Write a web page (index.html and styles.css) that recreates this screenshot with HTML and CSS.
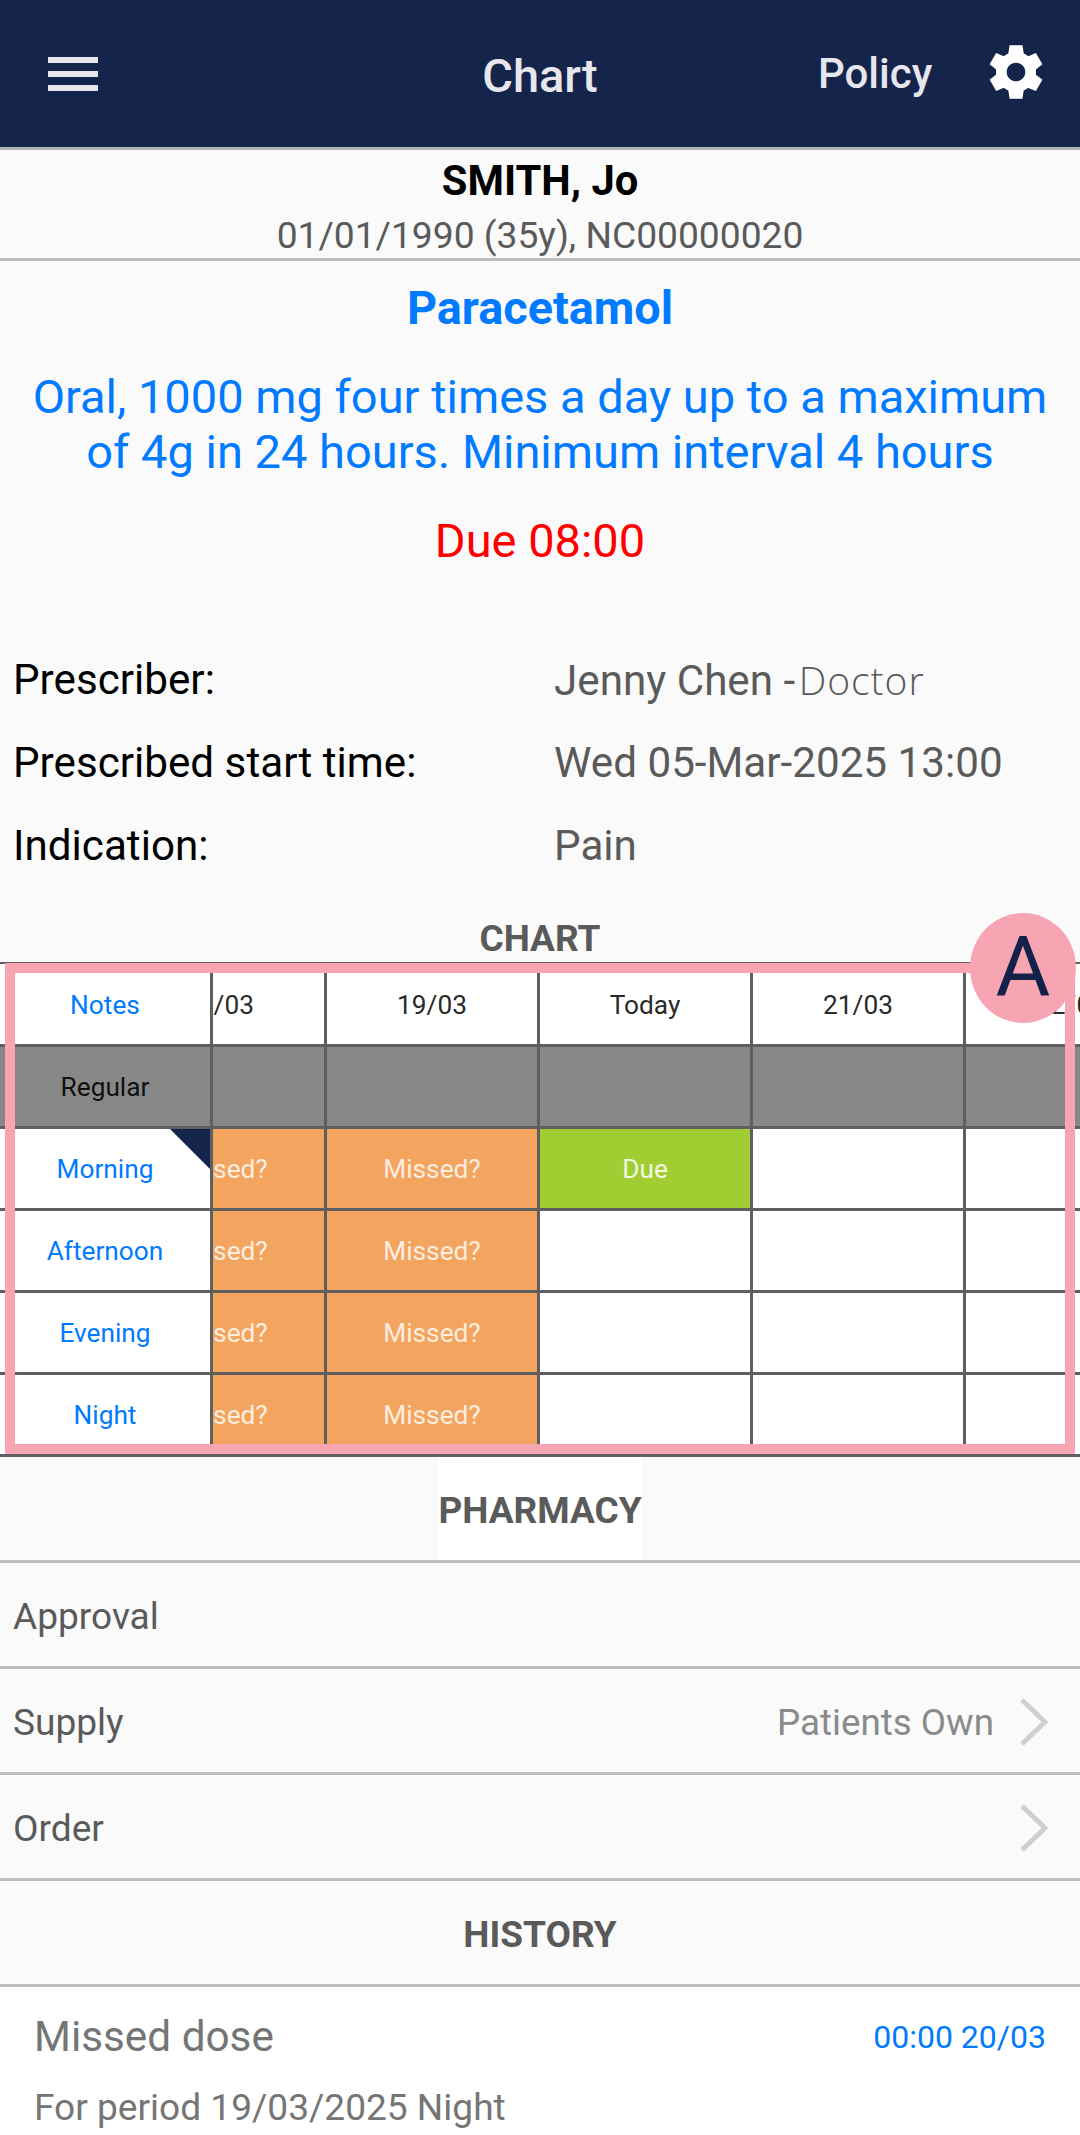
FILE: index.html
```html
<!DOCTYPE html>
<html lang="en">
<head>
  <meta charset="UTF-8">
  <title>Chart</title>
  <link rel="stylesheet" href="styles.css">
</head>
<body>
  <header class="topbar">
    <div class="menu-btn"><span></span><span></span><span></span></div>
    <div class="topbar-title">Chart</div>
    <div class="topbar-policy">Policy</div>
    <svg class="gear" viewBox="0 0 24 24"><path fill="#fff" d="M19.44 12.99l-.01.02c.04-.33.08-.67.08-1.01 0-.34-.03-.66-.07-.99l.01.02 2.44-1.92-2.43-4.22-2.87 1.16.01.01c-.52-.4-1.09-.74-1.71-.99h.01L14.44 2H9.57l-.44 3.07h.01c-.62.25-1.19.59-1.71.99l.01-.01-2.88-1.17-2.44 4.22 2.44 1.92.01-.02c-.04.33-.07.65-.07.99 0 .34.03.68.08 1.01l-.01-.02-2.1 1.65-.33.26 2.43 4.2 2.88-1.15-.02-.04c.53.41 1.1.75 1.73 1l-.03.01.45 3.09h4.86s.03-.18.06-.42l.38-2.65h-.01c.62-.25 1.2-.59 1.73-1l-.02.04 2.88 1.15 2.43-4.2s-.14-.12-.33-.26l-2.11-1.66zM12 15.5c-1.93 0-3.5-1.57-3.5-3.5s1.57-3.5 3.5-3.5 3.5 1.57 3.5 3.5-1.57 3.5-3.5 3.5z"/></svg>
  </header>

  <section class="patient">
    <div class="patient-name">SMITH, Jo</div>
    <div class="patient-info">01/01/1990 (35y), NC00000020</div>
  </section>

  <section class="drug">
    <div class="drug-name">Paracetamol</div>
    <div class="drug-dose">Oral, 1000 mg four times a day up to a maximum of 4g in 24 hours. Minimum interval 4 hours</div>
    <div class="drug-due">Due 08:00</div>
  </section>

  <section class="details">
    <div class="detail-row">
      <div class="detail-label">Prescriber:</div>
      <div class="detail-value">Jenny Chen - <span class="detail-role">Doctor</span></div>
    </div>
    <div class="detail-row">
      <div class="detail-label">Prescribed start time:</div>
      <div class="detail-value">Wed 05-Mar-2025 13:00</div>
    </div>
    <div class="detail-row">
      <div class="detail-label">Indication:</div>
      <div class="detail-value">Pain</div>
    </div>
  </section>

  <div class="chart-title">CHART</div>

  <div class="chart-wrap">
    <section class="chart">
      <div class="chart-fixed">
        <div class="cell cell-link">Notes</div>
        <div class="cell cell-group">Regular</div>
        <div class="cell cell-link cell-flagged">Morning</div>
        <div class="cell cell-link">Afternoon</div>
        <div class="cell cell-link">Evening</div>
        <div class="cell cell-link">Night</div>
      </div>
      <div class="chart-scroll">
        <div class="chart-days">
          <div class="cell">18/03</div>
          <div class="cell">19/03</div>
          <div class="cell">Today</div>
          <div class="cell">21/03</div>
          <div class="cell">22/03</div>

          <div class="cell cell-group"></div>
          <div class="cell cell-group"></div>
          <div class="cell cell-group"></div>
          <div class="cell cell-group"></div>
          <div class="cell cell-group"></div>

          <div class="cell cell-missed">Missed?</div>
          <div class="cell cell-missed">Missed?</div>
          <div class="cell cell-due">Due</div>
          <div class="cell"></div>
          <div class="cell"></div>

          <div class="cell cell-missed">Missed?</div>
          <div class="cell cell-missed">Missed?</div>
          <div class="cell"></div>
          <div class="cell"></div>
          <div class="cell"></div>

          <div class="cell cell-missed">Missed?</div>
          <div class="cell cell-missed">Missed?</div>
          <div class="cell"></div>
          <div class="cell"></div>
          <div class="cell"></div>

          <div class="cell cell-missed">Missed?</div>
          <div class="cell cell-missed">Missed?</div>
          <div class="cell"></div>
          <div class="cell"></div>
          <div class="cell"></div>
        </div>
      </div>
    </section>
    <div class="note-box"></div>
    <div class="note-badge">A</div>
  </div>

  <div class="section-title section-pharmacy"><span>PHARMACY</span></div>

  <div class="list-row">
    <div class="list-label">Approval</div>
  </div>
  <div class="list-row">
    <div class="list-label">Supply</div>
    <div class="list-value">Patients Own</div>
    <svg class="chevron" viewBox="0 0 28 48"><path d="M2 2 L25 24 L2 46" fill="none" stroke="#cfcfcf" stroke-width="5"/></svg>
  </div>
  <div class="list-row">
    <div class="list-label">Order</div>
    <svg class="chevron" viewBox="0 0 28 48"><path d="M2 2 L25 24 L2 46" fill="none" stroke="#cfcfcf" stroke-width="5"/></svg>
  </div>

  <div class="section-title section-history"><span>HISTORY</span></div>

  <section class="history">
    <div class="history-top">
      <div class="history-title">Missed dose</div>
      <div class="history-time">00:00 20/03</div>
    </div>
    <div class="history-sub">For period 19/03/2025 Night</div>
  </section>
</body>
</html>
```

FILE: styles.css
```css
html, body {
  margin: 0;
  padding: 0;
}
body {
  width: 1080px;
  height: 2135px;
  overflow: hidden;
  font-family: Roboto, "Liberation Sans", sans-serif;
  background-color: #fafafa;
}
.topbar {
  height: 147px;
  border-bottom: 3px solid #b4b4b4;
  background-color: #15244a;
  display: flex;
  align-items: center;
  position: relative;
  color: #e6e6ec;
}
.menu-btn {
  margin-left: 48px;
  width: 50px;
  height: 34px;
  display: flex;
  flex-direction: column;
  justify-content: space-between;
}
.menu-btn span {
  display: block;
  height: 6px;
  background-color: #e6e6ec;
}
.topbar-title {
  flex: 1;
  text-align: center;
  font-size: 47px;
  font-weight: 500;
  margin-left: -98px;
  padding-top: 4px;
}
.topbar-policy {
  position: absolute;
  left: 818px;
  top: 49px;
  font-size: 42px;
  font-weight: 500;
}
.gear {
  position: absolute;
  left: 984px;
  top: 40px;
  width: 64px;
  height: 64px;
}
.patient {
  height: 108px;
  border-bottom: 3px solid #bdbdbd;
  text-align: center;
}
.patient-name {
  font-size: 41.7px;
  font-weight: 700;
  color: #000;
  padding-top: 8px;
  line-height: 46px;
}
.patient-info {
  font-size: 37.2px;
  color: #5a5a5a;
  line-height: 44px;
  margin-top: 9px;
}
.drug {
  text-align: center;
  padding: 0 24px;
}
.drug-name {
  font-size: 46.8px;
  font-weight: 700;
  color: #007aff;
  padding-top: 21px;
  line-height: 52px;
}
.drug-dose {
  font-size: 47px;
  color: #007aff;
  line-height: 55px;
  margin-top: 35px;
}
.drug-due {
  font-size: 47px;
  color: #ff0000;
  line-height: 52px;
  margin-top: 36px;
}
.details {
  margin-top: 71px;
  padding: 0 13px;
}
.detail-row {
  display: flex;
  height: 83px;
  align-items: center;
  font-size: 42.2px;
}
.detail-label {
  width: 541px;
  color: #000;
}
.detail-value {
  color: #5a5a5a;
}
.detail-role {
  font-family: "Open Sans", sans-serif;
  font-size: 39px;
  font-weight: 300;
  letter-spacing: 1px;
  margin-left: -7px;
}
.chart-title {
  text-align: center;
  font-size: 37px;
  font-weight: 700;
  color: #5a5a5a;
  line-height: 42px;
  margin-top: 31px;
}
.chart-wrap {
  position: relative;
  margin-top: 2px;
}
.chart {
  display: flex;
  border-top: 2px solid #5f5f5f;
  border-bottom: 3px solid #5f5f5f;
  background-color: #fff;
}
.chart-fixed {
  width: 213px;
  flex: none;
  display: grid;
  grid-template-rows: 83px 82px 82px 82px 82px 79px;
}
.chart-scroll {
  flex: 1;
  overflow: hidden;
}
.chart-days {
  width: 1065px;
  margin-left: -99px;
  display: grid;
  grid-template-columns: repeat(5, 213px);
  grid-template-rows: 83px 82px 82px 82px 82px 79px;
}
.cell {
  box-sizing: border-box;
  border-right: 3px solid #5f5f5f;
  border-bottom: 3px solid #5f5f5f;
  padding-top: 1px;
  display: flex;
  align-items: center;
  justify-content: center;
  font-size: 26.25px;
  color: #2a2a2a;
  white-space: nowrap;
  overflow: hidden;
  position: relative;
}
.chart-fixed .cell:last-child,
.chart-days .cell:nth-last-child(-n+5) {
  border-bottom: none;
}
.cell-link {
  color: #007aff;
}
.cell-group {
  background-color: #888888;
  color: #111;
}
.cell-missed {
  background-color: #f3a45e;
  color: #fdeee0;
}
.cell-due {
  background-color: #a0ce32;
  color: #f2f8e0;
}
.cell-flagged::after {
  content: "";
  position: absolute;
  top: 0;
  right: 0;
  border-top: 40px solid #15244a;
  border-left: 40px solid transparent;
}
.note-box {
  position: absolute;
  left: 5px;
  top: 1px;
  width: 1070px;
  height: 491px;
  box-sizing: border-box;
  border: 10px solid #f8a5b3;
}
.note-badge {
  position: absolute;
  left: 970px;
  top: -49px;
  width: 106px;
  height: 110px;
  border-radius: 50%;
  background-color: #f8a5b3;
  color: #14224a;
  font-size: 84px;
  line-height: 110px;
  text-align: center;
}
.section-title {
  text-align: center;
  border-bottom: 3px solid #bdbdbd;
  font-size: 37px;
  font-weight: 700;
  color: #5a5a5a;
  height: 103px;
  line-height: 107px;
}
.section-pharmacy span {
  display: inline-block;
  height: 103px;
  width: 204px;
  background-color: #fff;
}
.list-row {
  height: 100px;
  padding: 3px 32px 0 13px;
  border-bottom: 3px solid #bdbdbd;
  display: flex;
  align-items: center;
  font-size: 37.1px;
}
.list-label {
  flex: 1;
  color: #5a5a5a;
}
.list-value {
  font-size: 36.75px;
  color: #8a8a8a;
  margin-right: 28px;
  position: relative;
  left: 2px;
}
.chevron {
  width: 28px;
  height: 48px;
}
.history {
  background-color: #fff;
  padding: 0 34px;
  height: 149px;
}
.history-top {
  display: flex;
  justify-content: space-between;
  align-items: center;
  padding-top: 25px;
}
.history-title {
  font-size: 42.3px;
  color: #757575;
}
.history-time {
  font-size: 32px;
  color: #007aff;
}
.history-sub {
  font-size: 37.1px;
  color: #757575;
  margin-top: 25px;
}
```
